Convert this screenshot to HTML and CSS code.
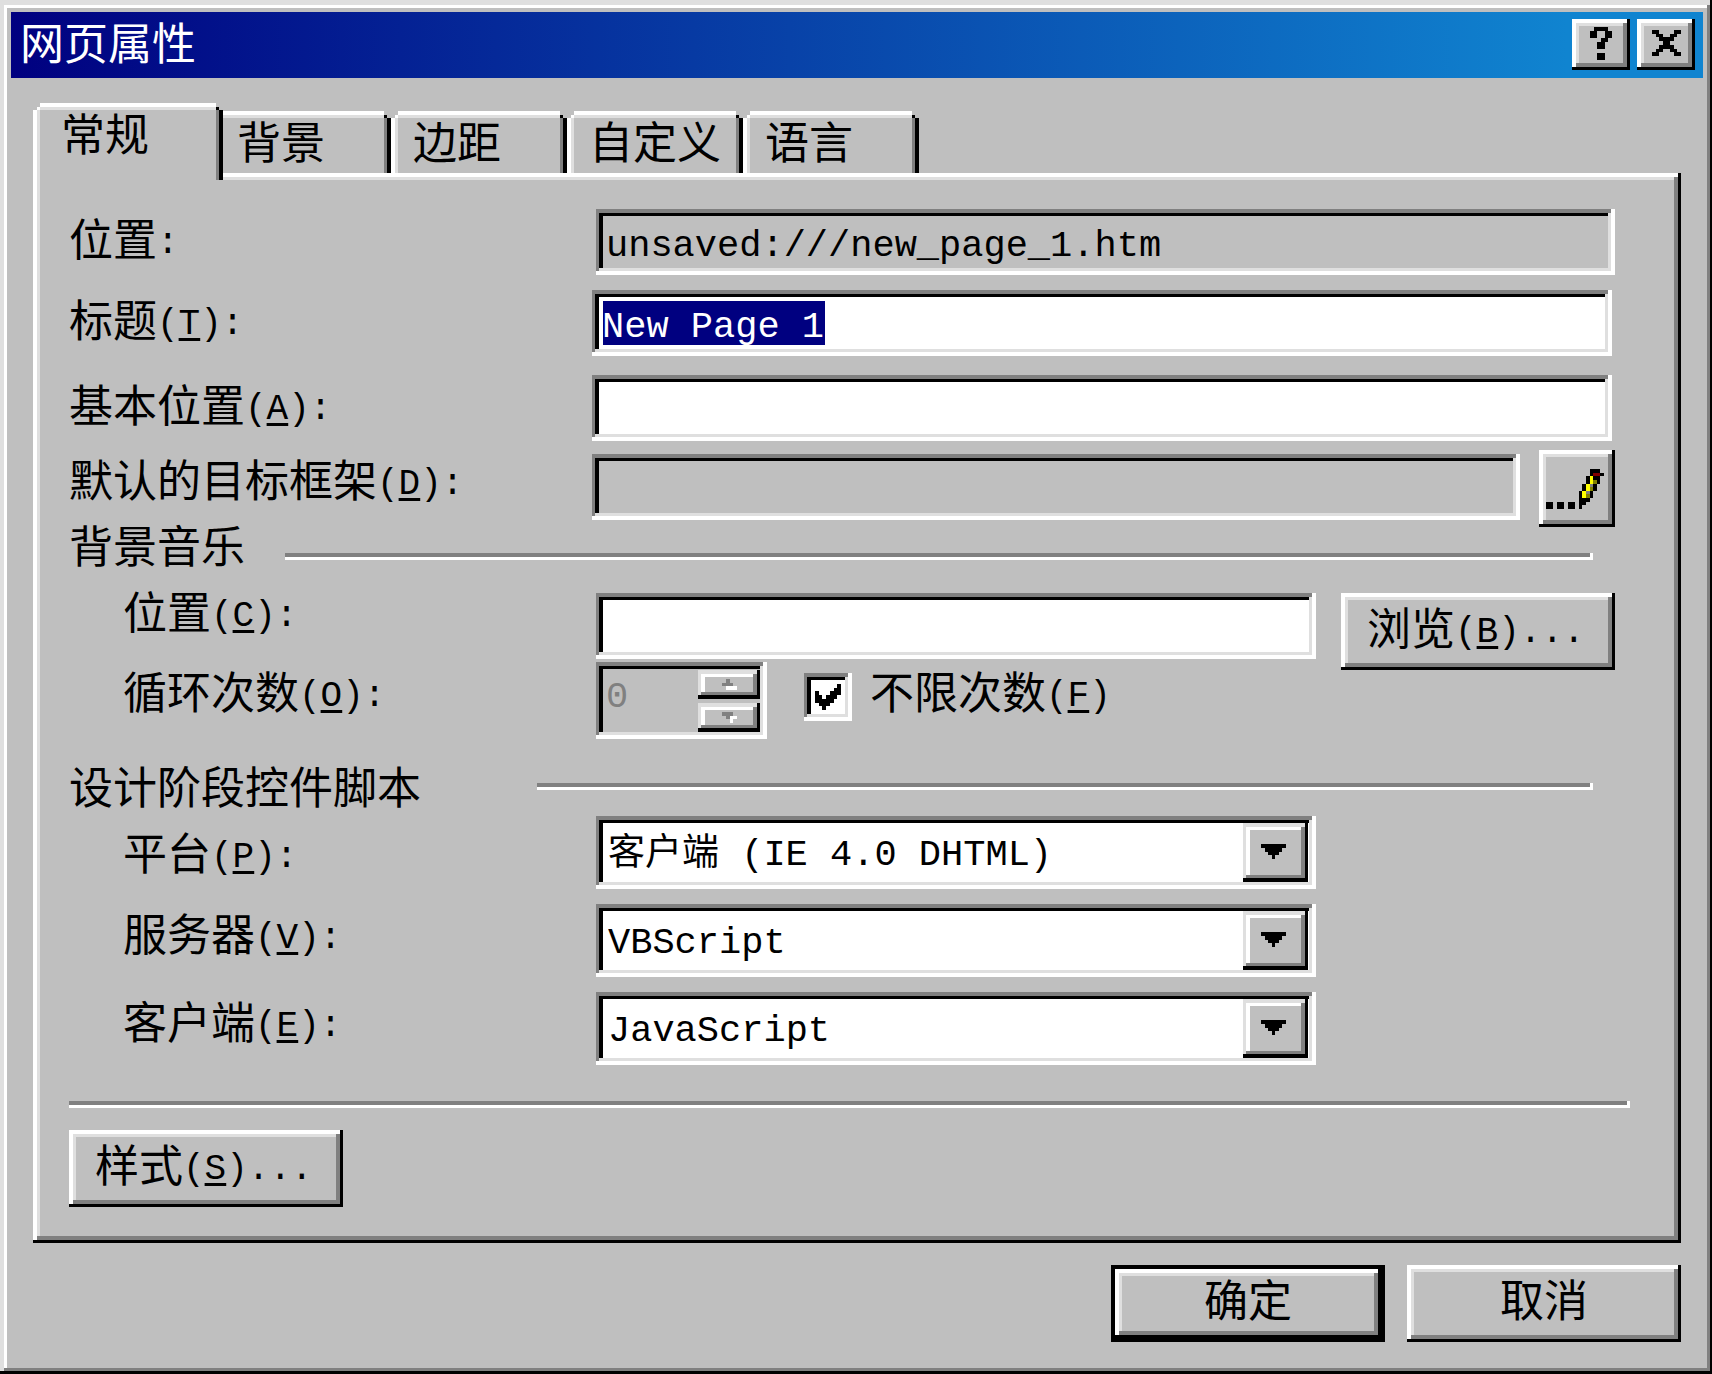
FILE: index.html
```html
<!DOCTYPE html>
<html lang="zh-CN">
<head>
<meta charset="utf-8">
<meta name="viewport" content="width=device-width, initial-scale=1">
<title>网页属性</title>
<link rel="stylesheet" href="styles.css">
</head>
<body>
<form class="window" onsubmit="return false">
  <header class="titlebar">
    <h1 class="title">网页属性</h1>
    <button type="button" class="raised title-btn" aria-label="帮助">
      <svg width="22" height="33" viewBox="0 0 6 9" preserveAspectRatio="none" shape-rendering="crispEdges"><path d="M1 0h4v1h1v2h-1v1h-1v2h-2v-2h1v-1h1v-2h-2v2h-2v-2h1zM2 7h2v2h-2z"/></svg>
    </button>
    <button type="button" class="raised title-btn" aria-label="关闭">
      <svg width="29" height="26" viewBox="0 0 8 7" preserveAspectRatio="none" shape-rendering="crispEdges"><path d="M0 0h2v1h1v1h2v-1h1v-1h2v1h-1v1h-1v1h-1v1h1v1h1v1h1v1h-2v-1h-1v-1h-2v1h-1v1h-2v-1h1v-1h1v-1h1v-1h-1v-1h-1v-1h-1z"/></svg>
    </button>
  </header>

  <div class="content">
    <div class="tabs" role="tablist">
      <button type="button" class="tab active" role="tab" aria-selected="true">常规</button>
      <button type="button" class="tab" role="tab">背景</button>
      <button type="button" class="tab" role="tab">边距</button>
      <button type="button" class="tab" role="tab">自定义</button>
      <button type="button" class="tab" role="tab">语言</button>
    </div>

    <main class="raised panel" role="tabpanel">
      <div class="row">
        <label class="label" for="loc">位置<span class="en">:</span></label>
        <input class="sunken field gray" id="loc" type="text" value="unsaved:///new_page_1.htm" readonly>
      </div>
      <div class="row wide gap-m">
        <label class="label" for="ttl">标题<span class="en">(<u>T</u>):</span></label>
        <input class="sunken field selected" id="ttl" type="text" value="New Page 1">
      </div>
      <div class="row wide gap-l">
        <label class="label" for="base">基本位置<span class="en">(<u>A</u>):</span></label>
        <input class="sunken field" id="base" type="text">
      </div>
      <div class="row frame-row">
        <label class="label" for="frame">默认的目标框架<span class="en">(<u>D</u>):</span></label>
        <input class="sunken field gray" id="frame" type="text" readonly>
        <button type="button" class="raised edit-btn" aria-label="更改目标框架">
          <svg width="58" height="40" viewBox="0 0 16 11" preserveAspectRatio="none" shape-rendering="crispEdges">
            <path d="M0 9h2v2h-2zM3 9h2v2h-2zM6 9h2v2h-2z"/>
            <path d="M12 0h3v1h1v1h-1v2h-1v2h-1v2h-1v1h-1v1h-1v1h-1v-5h1v-2h1v-2h1z"/>
            <path fill="#800000" d="M13 1h2v1h-2z"/>
            <path fill="#ffff00" d="M12 2h1v2h-1v2h-1v2h-1v-2h1v-2h1z"/>
            <path fill="#808000" d="M13 3h1v1h-1zM12 5h1v1h-1zM11 7h1v1h-1z"/>
            <path fill="#808080" d="M12 4h1v1h-1zM11 6h1v1h-1z"/>
          </svg>
        </button>
      </div>

      <div class="group group-music"><h2 class="group-title">背景音乐</h2><span class="rule"></span></div>
      <div class="row sub music-row">
        <label class="label" for="music">位置<span class="en">(<u>C</u>):</span></label>
        <input class="sunken field" id="music" type="text">
        <button type="button" class="raised btn left">浏览<span class="en">(<u>B</u>)...</span></button>
      </div>
      <div class="row sub loop-row">
        <label class="label" for="loop">循环次数<span class="en">(<u>O</u>):</span></label>
        <div class="sunken spin">
          <input class="spin-input" id="loop" type="number" value="0" disabled>
          <div class="spin-btns">
            <button type="button" class="key spin-btn" aria-label="增加" disabled>
              <svg width="15" height="11" viewBox="0 0 4 3" preserveAspectRatio="none" shape-rendering="crispEdges"><path fill="#fff" d="M1 2h3v1h-3z"/><path fill="#808080" d="M1 0h1v1h1v1h-3v-1h1z"/></svg>
            </button>
            <button type="button" class="key spin-btn" aria-label="减少" disabled>
              <svg width="15" height="11" viewBox="0 0 4 3" preserveAspectRatio="none" shape-rendering="crispEdges"><path fill="#fff" d="M2 1h2v1h-1v1h-1z"/><path fill="#808080" d="M0 0h3v1h-1v1h-1v-1h-1z"/></svg>
            </button>
          </div>
        </div>
        <label class="check-label">
          <span class="check">
            <input class="sunken check-box" type="checkbox" checked>
            <svg class="check-mark" width="26" height="26" viewBox="0 0 7 7" shape-rendering="crispEdges"><path d="M0 2h1v1h1v1h1v-1h1v-1h1v-1h1v-1h1v3h-1v1h-1v1h-1v1h-1v1h-1v-1h-1v-1h-1z"/></svg>
          </span>
          <span class="check-text">不限次数<span class="en">(<u>F</u>)</span></span>
        </label>
      </div>

      <div class="group group-script"><h2 class="group-title">设计阶段控件脚本</h2><span class="rule"></span></div>
      <div class="row sub combo-row first">
        <label class="label" for="plat">平台<span class="en">(<u>P</u>):</span></label>
        <div class="sunken combo">
          <select class="select" id="plat"><option>客户端 (IE 4.0 DHTML)</option></select>
          <span class="key arrow"><svg width="25" height="15" viewBox="0 0 7 4" preserveAspectRatio="none" shape-rendering="crispEdges"><path d="M0 0h7v1h-1v1h-1v1h-1v1h-1v-1h-1v-1h-1v-1h-1z"/></svg></span>
        </div>
      </div>
      <div class="row sub combo-row">
        <label class="label" for="server">服务器<span class="en">(<u>V</u>):</span></label>
        <div class="sunken combo">
          <select class="select" id="server"><option>VBScript</option><option>JavaScript</option></select>
          <span class="key arrow"><svg width="25" height="15" viewBox="0 0 7 4" preserveAspectRatio="none" shape-rendering="crispEdges"><path d="M0 0h7v1h-1v1h-1v1h-1v1h-1v-1h-1v-1h-1v-1h-1z"/></svg></span>
        </div>
      </div>
      <div class="row sub combo-row">
        <label class="label" for="client">客户端<span class="en">(<u>E</u>):</span></label>
        <div class="sunken combo">
          <select class="select" id="client"><option>JavaScript</option><option>VBScript</option></select>
          <span class="key arrow"><svg width="25" height="15" viewBox="0 0 7 4" preserveAspectRatio="none" shape-rendering="crispEdges"><path d="M0 0h7v1h-1v1h-1v1h-1v1h-1v-1h-1v-1h-1v-1h-1z"/></svg></span>
        </div>
      </div>

      <div class="rule divider"></div>
      <button type="button" class="raised btn left">样式<span class="en">(<u>S</u>)...</span></button>
    </main>

    <footer class="actions">
      <button type="submit" class="raised btn default">确定</button>
      <button type="button" class="raised btn">取消</button>
    </footer>
  </div>
</form>
</body>
</html>
```
FILE: styles.css
```css
:root {
  --face: #bfbfbf;
  --light: #dfdfdf;
  --shade: #808080;
  --navy: #000080;
}

* { box-sizing: border-box; }

body {
  margin: 0;
  background: var(--face);
  color: #000;
  font: 44px/44px "Noto Sans CJK SC", sans-serif;
}

button, input, select {
  margin: 0;
  padding: 0;
  border: 0;
  border-radius: 0;
  outline: 0;
  background: var(--face);
  color: #000;
  font: inherit;
}

svg { display: block; }

.en {
  font-family: "Liberation Mono", monospace;
  font-size: 36px;
  line-height: 0;
  vertical-align: 3px;
}

u {
  text-decoration-thickness: 3px;
  text-underline-offset: 4px;
  text-decoration-skip-ink: none;
}

/* bevels */
.raised {
  background: var(--face);
  box-shadow: inset -3px -3px #000, inset 4px 4px #fff,
    inset -7px -7px var(--shade), inset 7px 7px var(--light);
}

.sunken {
  box-shadow: inset -4px -4px #fff, inset 3px 4px var(--shade),
    inset -7px -7px var(--light), inset 7px 7px #000;
}

.key {
  background: var(--face);
  box-shadow: inset -3px -4px #000, inset 3px 4px var(--light),
    inset -7px -7px var(--shade), inset 7px 7px #fff;
}

/* window */
.window {
  display: flex;
  flex-direction: column;
  min-height: 100vh;
  padding: 12px 9px 32px 11px;
  box-shadow: inset -2px -3px #000, inset 4px 5px var(--light),
    inset -5px -6px var(--shade), inset 7px 8px #fff;
}

.titlebar {
  display: flex;
  align-items: flex-start;
  gap: 7px;
  height: 66px;
  padding: 7px 8px 0 9px;
  background: linear-gradient(90deg, var(--navy), #1084d0 92%);
}

.title {
  flex: 1;
  margin: 0;
  color: #fff;
  font-size: 44px;
  font-weight: 400;
}

.title-btn {
  display: grid;
  place-items: center;
  width: 58px;
  height: 51px;
  padding-bottom: 3px;
}

.content { padding: 25px 22px 0; }

/* tabs */
.tabs {
  display: flex;
  align-items: flex-end;
  height: 70px;
}

.tab {
  position: relative;
  width: 176px;
  height: 62px;
  padding: 0 22px 4px;
  background: var(--face);
  text-align: left;
  box-shadow: inset -4px 0 #000, inset 4px 4px #fff,
    inset -7px 0 var(--shade), inset 7px 7px var(--light);
  clip-path: polygon(0 7px, 4px 7px, 4px 4px, 7px 4px, 7px 0,
    calc(100% - 7px) 0, calc(100% - 7px) 4px, calc(100% - 4px) 4px,
    calc(100% - 4px) 7px, 100% 7px, 100% 100%, 0 100%);
}

.tab::before, .tab::after {
  content: "";
  position: absolute;
  top: 4px;
  width: 3px;
  height: 3px;
}

.tab::before { left: 4px; background: #fff; }
.tab::after { right: 4px; background: #000; }

.tab.active {
  z-index: 1;
  width: 190px;
  height: 77px;
  margin: 0 -8px -7px 0;
  padding: 0 28px 20px;
}

/* panel */
.panel {
  padding: 36px 66px 36px 36px;
}

.row { display: flex; align-items: flex-start; }
.row.wide { margin-right: 3px; }
.gap-m { margin-top: 15px; }
.gap-l { margin-top: 19px; }

.label {
  flex: none;
  width: 527px;
  padding-top: 6px;
}

.wide .label, .frame-row .label { width: 523px; }
.sub .label { padding-left: 54px; }

.field {
  flex: 1;
  min-width: 0;
  height: 66px;
  padding: 8px 10px 0;
  background: #fff;
  font: 37px/44px "Liberation Mono", monospace;
}

.field.gray { background: var(--face); }

.field.selected {
  color: #fff;
  background: linear-gradient(var(--navy), var(--navy)) 11px 11px / 10ch 44px no-repeat #fff;
}

.frame-row { margin-top: 9px; }
.frame-row .field { margin: 4px 19px 0 0; }

.edit-btn {
  width: 76px;
  height: 77px;
  padding: 0 0 0 7px;
}

.group { display: flex; align-items: flex-start; margin-right: 22px; }

.group-title {
  margin: 0;
  font-size: 44px;
  font-weight: 400;
}

.rule {
  flex: 1;
  height: 7px;
  background: var(--shade);
  box-shadow: inset -3px -3px #fff;
}

.group-music { margin-top: -5px; }
.group-music .rule { margin: 31px 0 0 40px; }
.group-script { margin-top: 24px; }
.group-script .rule { margin: 20px 0 0 116px; }

.music-row { margin-top: 27px; height: 66px; }
.music-row .label { margin-top: -5px; padding-top: 0; }
.music-row .btn { margin-left: 25px; }

.btn {
  flex: none;
  width: 274px;
  height: 77px;
  padding-bottom: 12px;
  text-align: center;
  white-space: nowrap;
}

.btn.left { padding-left: 26px; text-align: left; }

.btn.default {
  box-shadow: inset 0 0 0 4px #000, inset -7px -7px #000, inset 8px 8px #fff,
    inset -11px -11px var(--shade), inset 11px 11px var(--light);
}

.loop-row { margin-top: 3px; }

.spin {
  display: flex;
  width: 171px;
  height: 77px;
  padding: 8px 7px 7px;
}

.spin-input {
  flex: 1;
  min-width: 0;
  padding: 0 3px 8px;
  background: transparent;
  color: var(--shade);
  font-family: "Liberation Mono", monospace;
  font-size: 37px;
  appearance: textfield;
}

.spin-input::-webkit-inner-spin-button { appearance: none; }

.spin-btns {
  display: flex;
  flex-direction: column;
  justify-content: space-between;
  width: 62px;
}

.spin-btn {
  display: grid;
  place-items: center;
  height: 29px;
}

.check-label {
  display: flex;
  gap: 18px;
  margin: 6px 0 0 37px;
}

.check { position: relative; height: 44px; }

.check-box {
  display: block;
  width: 48px;
  height: 48px;
  margin-top: 5px;
  background: #fff;
  appearance: none;
}

.check-mark {
  position: absolute;
  top: 16px;
  left: 11px;
  visibility: hidden;
  pointer-events: none;
}

.check-box:checked + .check-mark { visibility: visible; }

.combo-row { margin: 15px 299px 0 0; }
.combo-row.first { margin-top: 9px; }
.combo-row.first .label { padding-top: 13px; }

.combo {
  position: relative;
  flex: 1;
  height: 73px;
  background: #fff;
}

.select {
  display: block;
  width: 100%;
  height: 100%;
  padding: 4px 80px 0 12px;
  background: transparent;
  font: 37px/44px "Liberation Mono", "Noto Sans CJK SC", monospace;
  appearance: none;
}

.arrow {
  position: absolute;
  top: 7px;
  right: 8px;
  bottom: 7px;
  display: grid;
  place-items: center;
  width: 65px;
  padding: 0 4px 2px 0;
  pointer-events: none;
}

.divider { margin: 36px -15px 22px 0; }

.actions {
  display: flex;
  justify-content: flex-end;
  gap: 22px;
  margin-top: 22px;
}
```
